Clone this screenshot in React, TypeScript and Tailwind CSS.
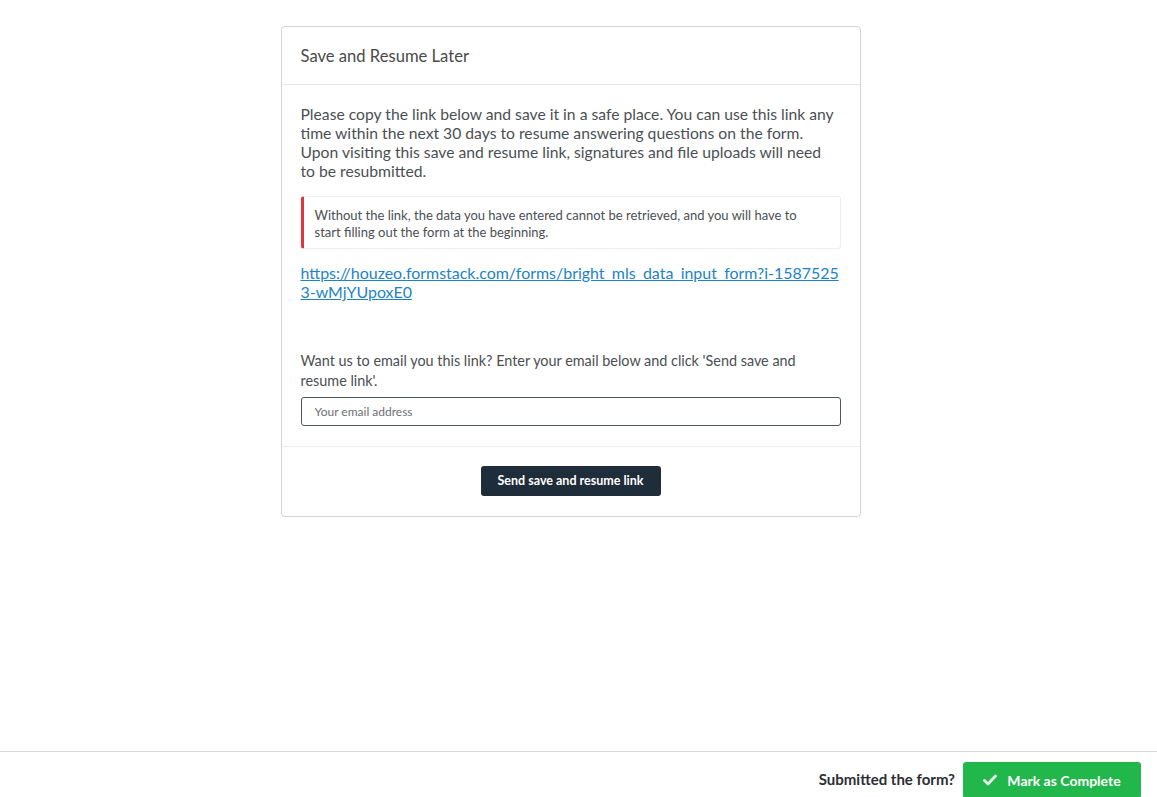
import React, { useState } from 'react';

const LINK =
  'https://houzeo.formstack.com/forms/bright_mls_data_input_form?i-15875253-wMjYUpoxE0';

function CheckIcon() {
  return (
    <svg width="14" height="12" viewBox="0 0 14 12" aria-hidden="true">
      <path d="M1.5 6.5 L5 10 L12.5 2" fill="none" stroke="#e8f7ec" strokeWidth="2.8" strokeLinecap="round" strokeLinejoin="round" />
    </svg>
  );
}

export default function App() {
  const [email, setEmail] = useState('');

  return (
    <div className="h-screen overflow-hidden bg-white flex flex-col font-['Lato','Liberation_Sans',sans-serif]">
      <main className="h-[751px] shrink-0 flex justify-center pt-[26px] pr-[16px]">
        <div className="w-[580px] h-[491px] border border-[#d4d4d4] rounded-[4px] flex flex-col">
          {/* header */}
          <div className="h-[58px] px-[19px] flex items-center border-b border-[#e8e8e8] text-[16.6px] text-[#4a4a4a] pt-[2px]">
            Save and Resume Later
          </div>

          {/* body */}
          <div className="px-[19px] pt-[20px] pb-[20px] border-b border-[#ececec]">
            <p className="pr-[4px] text-[15.7px] leading-[19px] text-[#4b4f54]">
              Please copy the link below and save it in a safe place. You can use this link any time within the next 30 days to resume answering questions on the form. Upon visiting this save and resume link, signatures and file uploads will need to be resubmitted.
            </p>

            <div className="mt-[15px] h-[53px] border border-[#eeeeee] border-l-[3px] border-l-[#e0353b] rounded-[3px] pl-[11px] pr-[30px] pt-[10px] text-[13px] leading-[17px] text-[#4b4f54]">
              Without the link, the data you have entered cannot be retrieved, and you will have to start filling out the form at the beginning.
            </div>

            <a
              href="#"
              className="block mt-[14px] text-[15.95px] leading-[19px] text-[#1d83c6] underline break-all"
            >
              {LINK}
            </a>

            <p className="mt-[50px] pr-[30px] text-[14.4px] leading-[20px] text-[#4b4f54]">
              Want us to email you this link? Enter your email below and click 'Send save and resume link'.
            </p>

            <input
              type="email"
              value={email}
              onChange={(e) => setEmail(e.target.value)}
              placeholder="Your email address"
              className="mt-[6px] w-full h-[29px] border border-[#4c5661] rounded-[3px] px-[13px] text-[12px] text-[#333] placeholder:text-[#6b6f74] outline-none"
            />
          </div>

          {/* actions */}
          <div className="flex-1 flex justify-center pt-[19px]">
            <button className="w-[180px] h-[30px] bg-[#1f2d3a] text-white text-[12.5px] font-bold rounded-[3px]">
              Send save and resume link
            </button>
          </div>
        </div>
      </main>

      <footer className="border-t border-[#d6d6d6] flex items-start justify-end pt-[10px] pr-[16px] gap-[8px]">
        <span className="text-[15px] font-bold text-[#2b2f33] mt-[6px]">Submitted the form?</span>
        <button className="w-[178px] h-[36px] bg-[#22b74b] rounded-[3px] flex items-center justify-center gap-[10px] text-white text-[14px] font-bold">
          <CheckIcon />
          Mark as Complete
        </button>
      </footer>
    </div>
  );
}
